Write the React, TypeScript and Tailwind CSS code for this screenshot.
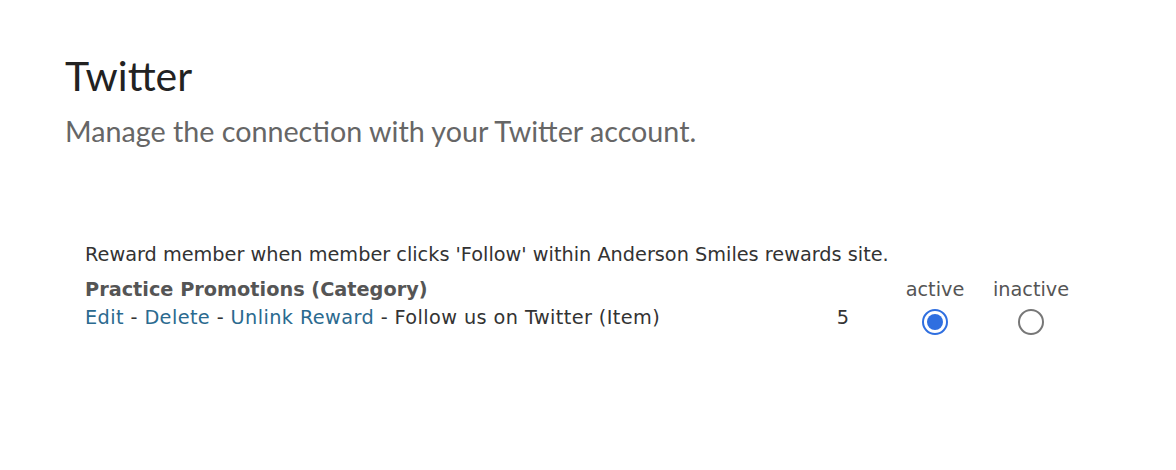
export default function App() {
  return (
    <div className="min-h-[470px] w-[1176px] bg-white">
      <div className="px-[65px] pt-[52px]">
        <h1 className="font-['Lato',sans-serif] text-[41px] leading-[48px] text-[#222]">Twitter</h1>
        <p className="mt-[13px] font-['Lato',sans-serif] text-[28.7px] leading-[36px] text-[#666]">
          Manage the connection with your Twitter account.
        </p>
      </div>
      <div className="mt-[92px] px-[85px] font-['DejaVu_Sans',sans-serif] text-[19.3px] text-[#333]">
        <p className="leading-[28px]">
          Reward member when member clicks 'Follow' within Anderson Smiles rewards site.
        </p>
        <div className="mt-[7px] flex items-end">
          <div className="w-[728px]">
            <div className="font-bold leading-[28px] text-[#555]">Practice Promotions (Category)</div>
            <div className="whitespace-nowrap leading-[28px] tracking-[0.4px]">
              <a className="text-[#2b6a8f]">Edit</a> - <a className="text-[#2b6a8f]">Delete</a> -{" "}
              <a className="text-[#2b6a8f]">Unlink Reward</a> - Follow us on Twitter (Item)
            </div>
          </div>
          <div className="w-[60px] text-center leading-[28px]">5</div>
          <div className="flex w-[124px] flex-col items-center">
            <span className="leading-[28px] text-[#555]">active</span>
            <span className="flex h-[28px] items-center pt-[8px]">
              <span className="flex h-[26px] w-[26px] items-center justify-center rounded-full border-[2px] border-[#2f6fe0]">
                <span className="h-[16px] w-[16px] rounded-full bg-[#2f6fe0]" />
              </span>
            </span>
          </div>
          <div className="flex w-[68px] flex-col items-center">
            <span className="whitespace-nowrap leading-[28px] text-[#555]">inactive</span>
            <span className="flex h-[28px] items-center pt-[8px]">
              <span className="h-[26px] w-[26px] rounded-full border-[2px] border-[#777]" />
            </span>
          </div>
        </div>
      </div>
    </div>
  );
}
